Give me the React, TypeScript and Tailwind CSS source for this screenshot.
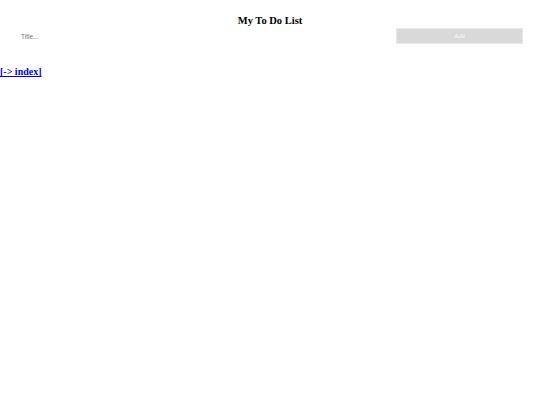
export default function App() {
  return (
    <div className="w-[540px] h-[405px] bg-white" style={{ fontFamily: '"Liberation Serif", serif' }}>
      <div className="pl-[17px] pr-[17px] pt-[15px]">
        <h2 className="text-center text-[10.5px] font-bold leading-[12px] text-black" style={{ fontFamily: '"Liberation Serif", serif' }}>
          My To Do List
        </h2>
        <div className="flex mt-[1px] h-[16px]">
          <input
            type="text"
            placeholder="Title..."
            className="flex-1 h-[16px] pl-[4px] text-[6.5px] outline-none bg-white placeholder:text-[#757575]"
            style={{ fontFamily: '"Liberation Sans", sans-serif' }}
          />
          <button
            className="w-[127px] h-[16px] bg-[#d9d9d9] text-white text-[6px] border border-[#e6e6e6]"
            style={{ fontFamily: '"Liberation Serif", serif' }}
          >
            Add
          </button>
        </div>
      </div>
      <div className="mt-[14px]">
        <a href="#" className="text-[10px] font-bold text-[#0000ee] underline leading-[12px]">
          [-&gt; index]
        </a>
      </div>
    </div>
  );
}
